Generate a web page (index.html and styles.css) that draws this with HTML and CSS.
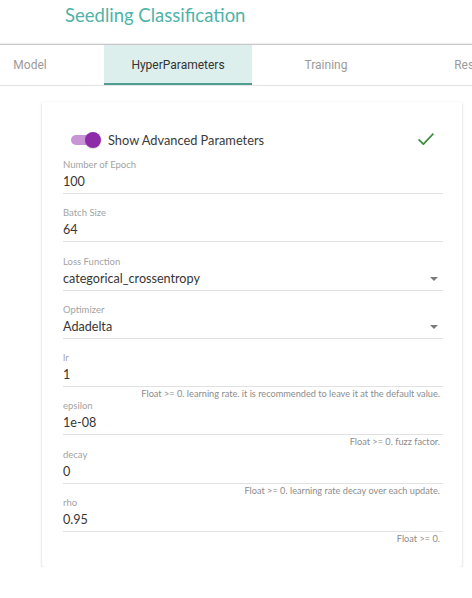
FILE: index.html
```html
<!DOCTYPE html>
<html lang="en">
<head>
<meta charset="utf-8">
<title>Seedling Classification</title>
<link rel="stylesheet" href="styles.css">
</head>
<body>
<header class="app-header">
  <h1 class="app-title">Seedling Classification</h1>
</header>
<nav class="tabbar">
  <div class="tabs">
    <div class="tab">Model</div>
    <div class="tab tab-active">HyperParameters</div>
    <div class="tab">Training</div>
    <div class="tab">Results</div>
  </div>
</nav>
<main class="content">
  <section class="card">
    <div class="toggle-row">
      <div class="switch">
        <span class="switch-track"></span>
        <span class="switch-thumb"></span>
      </div>
      <span class="toggle-label">Show Advanced Parameters</span>
      <svg class="check" width="16" height="12" viewBox="0 0 16 12"><path d="M0.6 6.3 L5.4 11.2 L15.4 0.6" fill="none" stroke="#3d8f40" stroke-width="1.7"/></svg>
    </div>

    <div class="field">
      <div class="field-label">Number of Epoch</div>
      <div class="field-value">100</div>
      <div class="field-help"></div>
    </div>
    <div class="field">
      <div class="field-label">Batch Size</div>
      <div class="field-value">64</div>
      <div class="field-help"></div>
    </div>
    <div class="field">
      <div class="field-label">Loss Function</div>
      <div class="field-value"><span>categorical_crossentropy</span><span class="caret"></span></div>
      <div class="field-help"></div>
    </div>
    <div class="field">
      <div class="field-label">Optimizer</div>
      <div class="field-value"><span>Adadelta</span><span class="caret"></span></div>
      <div class="field-help"></div>
    </div>
    <div class="field">
      <div class="field-label">lr</div>
      <div class="field-value">1</div>
      <div class="field-help">Float &gt;= 0. learning rate. it is recommended to leave it at the default value.</div>
    </div>
    <div class="field">
      <div class="field-label">epsilon</div>
      <div class="field-value">1e-08</div>
      <div class="field-help">Float &gt;= 0. fuzz factor.</div>
    </div>
    <div class="field">
      <div class="field-label">decay</div>
      <div class="field-value">0</div>
      <div class="field-help">Float &gt;= 0. learning rate decay over each update.</div>
    </div>
    <div class="field">
      <div class="field-label">rho</div>
      <div class="field-value">0.95</div>
      <div class="field-help">Float &gt;= 0.</div>
    </div>
  </section>
</main>
</body>
</html>
```
FILE: styles.css
```css
* { box-sizing: border-box; }

body {
  margin: 0;
  background: #ffffff;
  font-family: Lato, "Open Sans", sans-serif;
  color: #333333;
  overflow: hidden;
}

.app-header {
  height: 44px;
  padding: 3px 0 0 65px;
}

.app-title {
  margin: 0;
  font-size: 18.5px;
  line-height: 24px;
  font-weight: 400;
  color: #4fb3a8;
}

.tabbar {
  border-top: 1px solid #c8c8c8;
  border-bottom: 1px solid #e3e3e3;
  box-shadow: 0 -1px 1px rgba(0, 0, 0, 0.06);
  overflow: hidden;
}

.tabs {
  display: flex;
  margin-left: -44px;
  height: 40px;
}

.tab {
  flex: 0 0 148px;
  display: flex;
  align-items: center;
  justify-content: center;
  font-family: Roboto, "Liberation Sans", sans-serif;
  font-size: 12px;
  color: #9b9b9b;
  white-space: nowrap;
}

.tab-active {
  background: #ddefec;
  color: #333333;
  border-bottom: 2px solid #4f9e90;
  padding-top: 2px;
}

.content {
  padding: 16px 0 0 42px;
}

.card {
  width: 420px;
  padding: 26px 19px 22px 21px;
  background: #ffffff;
  border-radius: 2px;
  box-shadow: 0 1px 3px rgba(0, 0, 0, 0.16), 0 2px 2px -1px rgba(0, 0, 0, 0.28);
}

.toggle-row {
  display: flex;
  align-items: center;
  height: 24px;
  margin-bottom: 7px;
}

.switch {
  position: relative;
  width: 31px;
  height: 16px;
  margin-left: 8px;
  flex: 0 0 auto;
}

.switch-track {
  position: absolute;
  left: 0;
  top: 3px;
  width: 28px;
  height: 10px;
  border-radius: 5px;
  background: #c994d3;
}

.switch-thumb {
  position: absolute;
  left: 14px;
  top: 0;
  width: 16px;
  height: 16px;
  border-radius: 50%;
  background: #8e2ba8;
  box-shadow: 0 1px 1px rgba(0, 0, 0, 0.15);
}

.toggle-label {
  margin-left: 6px;
  font-size: 12.8px;
  color: #3a3a3a;
  flex: 1;
}

.check {
  margin-right: 9px;
  margin-top: -2px;
}

.field-label {
  font-size: 9.5px;
  line-height: 12px;
  color: #a3a3a3;
}

.field-value {
  display: flex;
  align-items: center;
  justify-content: space-between;
  font-size: 12.6px;
  line-height: 18px;
  height: 23px;
  padding: 2px 0 2px 0;
  border-bottom: 1px solid #e2e2e2;
  color: #363636;
}

.caret {
  width: 0;
  height: 0;
  margin-right: 5px;
  border-left: 4px solid transparent;
  border-right: 4px solid transparent;
  border-top: 4px solid #7a7a7a;
}

.field-help {
  padding: 1px 3px 0 0;
  height: 13.3px;
  font-size: 9.2px;
  line-height: 12px;
  text-align: right;
  color: #8c8c8c;
  white-space: nowrap;
}
```
